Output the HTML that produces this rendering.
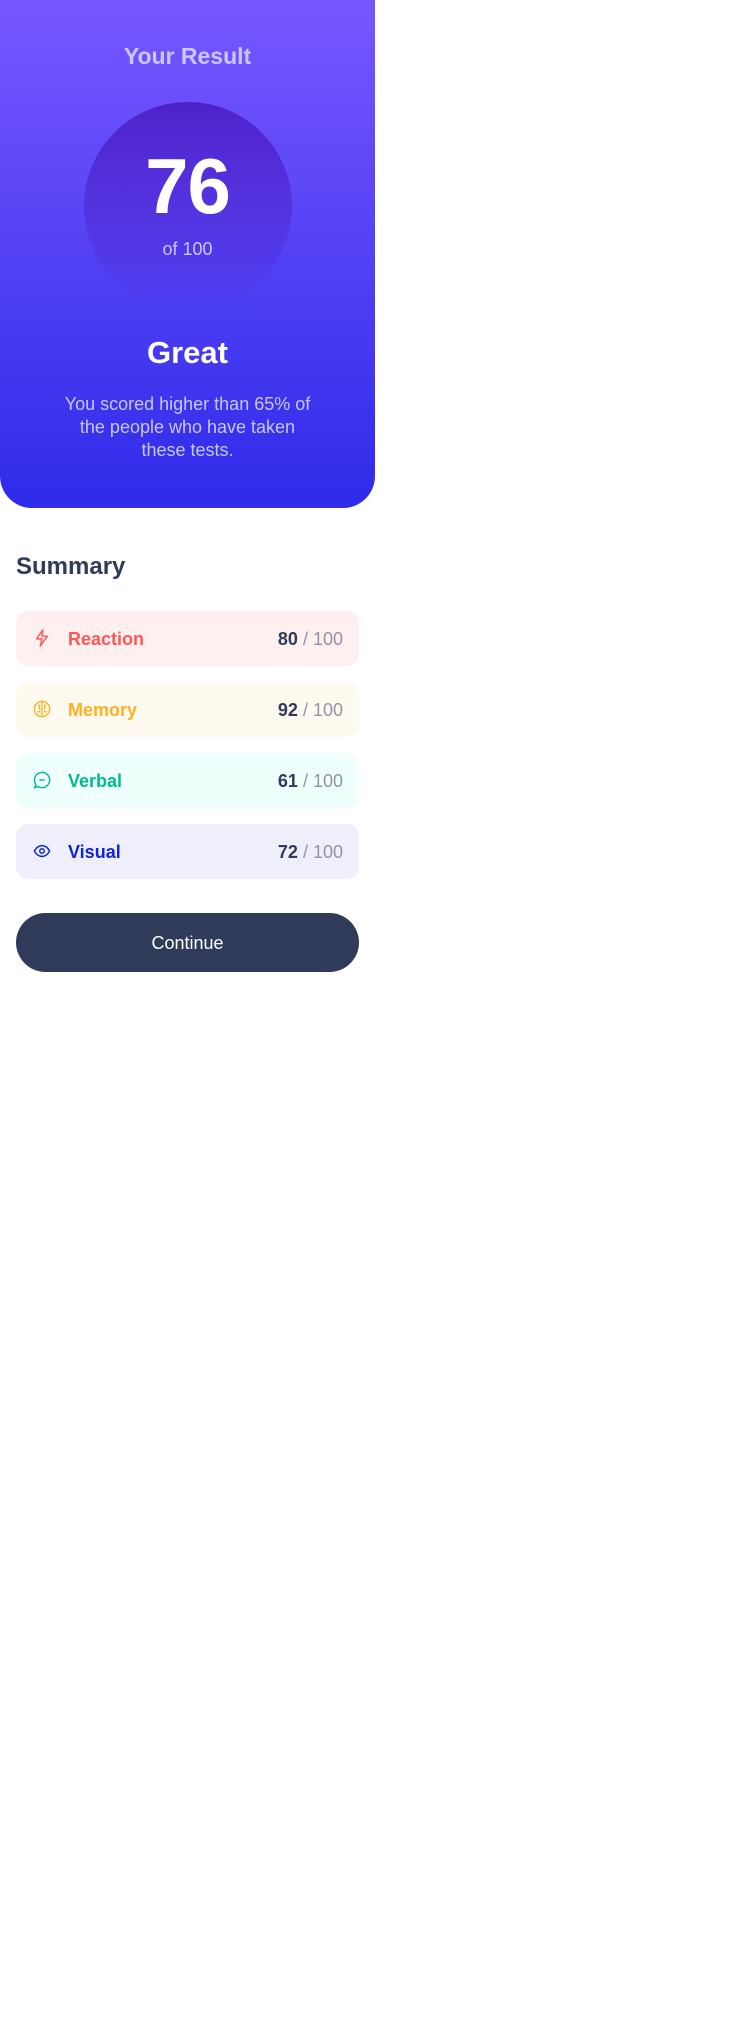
<!DOCTYPE html>
<html><head><style>
*{margin:0;padding:0;box-sizing:border-box}
body{width:750px;height:2040px;background:#fff;font-family:"Liberation Sans",sans-serif;position:relative}
.card{position:absolute;left:0;top:0;width:375px;height:508px;border-radius:0 0 32px 32px;background:linear-gradient(#7857FF,#2E2BE9);text-align:center}
.t{position:absolute;top:43px;width:100%;font-size:23px;font-weight:bold;color:#C8C7FF}
.circ{position:absolute;left:84px;top:102px;width:208px;height:208px;border-radius:50%;background:linear-gradient(#4D21C9,rgba(37,33,201,0) 100%)}
.n{position:absolute;top:141px;width:100%;font-size:78px;font-weight:bold;color:#fff;letter-spacing:-1px}
.of{position:absolute;top:239px;width:100%;font-size:18px;color:#C8C7FF}
.g{position:absolute;top:335px;width:100%;font-size:31px;font-weight:bold;color:#fff}
.p{position:absolute;top:393px;left:60px;width:255px;font-size:18px;line-height:23px;color:#C8C7FF}
h2{position:absolute;left:16px;top:553px;font-size:24px;color:#303B59}
.row{position:absolute;left:16px;width:343px;height:55px;border-radius:12px;font-size:18px;font-weight:bold}
.row svg{position:absolute;left:17px;top:18px}
.row .l{position:absolute;left:52px;top:18px}
.row .s{position:absolute;right:16px;top:18px;color:#303B59}
.row .s span{color:#9094A4;font-weight:normal}
.btn{position:absolute;left:16px;top:913px;width:343px;height:59px;border-radius:30px;background:#303B5A;color:#fff;font-size:18px;text-align:center;line-height:60px}
</style></head><body>
<div class="card">
<div class="t">Your Result</div>
<div class="circ"></div>
<div class="n">76</div>
<div class="of">of 100</div>
<div class="g">Great</div>
<div class="p">You scored higher than 65% of the people who have taken these tests.</div>
</div>
<h2>Summary</h2>
<div class="row" style="top:611px;background:#FFF0F0;color:#FF5757">
<svg width="18" height="18" viewBox="0 0 20 20" fill="none" stroke="#FF5757" stroke-width="1.6" stroke-linejoin="round"><path d="M11 1 L4 11 H10 L8 19 L16 8 H10 Z"/></svg>
<div class="l">Reaction</div><div class="s">80 <span>/ 100</span></div></div>
<div class="row" style="top:682px;background:#FFFAF0;color:#FFB01F">
<svg width="18" height="18" viewBox="0 0 20 20" fill="none" stroke="#FFB01F" stroke-width="1.5"><circle cx="10" cy="10" r="8.5"/><path d="M10 2v16M6 5c2 2 0 4 2 6M14 5c-2 2 0 4-2 6M5 13h3M12 13h3"/></svg>
<div class="l">Memory</div><div class="s">92 <span>/ 100</span></div></div>
<div class="row" style="top:753px;background:#EFFFFC;color:#00BB8F">
<svg width="18" height="18" viewBox="0 0 20 20" fill="none" stroke="#00BB8F" stroke-width="1.6"><path d="M10 1.5a8.5 8.5 0 1 1-4.5 15.7L2 18.5l1.2-3.6A8.5 8.5 0 0 1 10 1.5z"/><path d="M7 10h6"/></svg>
<div class="l">Verbal</div><div class="s">61 <span>/ 100</span></div></div>
<div class="row" style="top:824px;background:#EFEFFC;color:#1125D6">
<svg width="18" height="18" viewBox="0 0 20 20" fill="none" stroke="#1125D6" stroke-width="1.6"><path d="M1.5 10C4 5.5 7 4 10 4s6 1.5 8.5 6C16 14.5 13 16 10 16s-6-1.5-8.5-6z"/><circle cx="10" cy="10" r="2.5"/></svg>
<div class="l">Visual</div><div class="s">72 <span>/ 100</span></div></div>
<div class="btn">Continue</div>
</body></html>
